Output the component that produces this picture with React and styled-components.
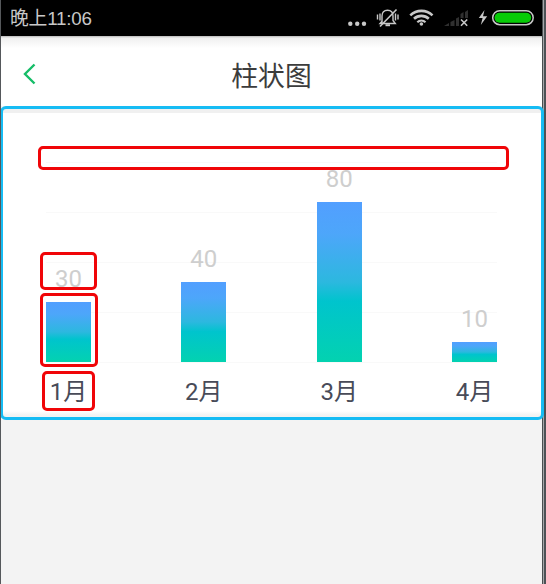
import React from 'react';
import styled, { createGlobalStyle } from 'styled-components';

const Global = createGlobalStyle`
  * { box-sizing: border-box; }
  body { margin: 0; background: #f3f3f3; font-family: Roboto, "Noto Sans CJK SC", sans-serif; }
`;

const Screen = styled.main`
  position: relative;
  width: 546px;
  height: 584px;
  overflow: hidden;
  padding-right: 4px;
  background: linear-gradient(to right, #f3f3f3 0 541px, #4a4e50 541px 542px, #a5a8aa 542px 543px, #4d5256 543px);
  border-left: 1px solid #55585b;
`;

const StatusBar = styled.header`
  display: flex;
  align-items: center;
  justify-content: space-between;
  height: 36px;
  padding-left: 9px;
  background: #000;
  color: #c8c8c8;
`;

const Clock = styled.time`
  padding-top: 2px;
  font: 18.8px/34px "Liberation Sans", "Noto Sans CJK SC", sans-serif;
  letter-spacing: -0.2px;
`;

const StatusIcons = styled.svg`
  display: block;
  width: 201px;
  height: 36px;
`;

const TitleBar = styled.nav`
  display: grid;
  grid-template-columns: 60px 1fr 60px;
  align-items: center;
  height: 70px;
  background: linear-gradient(#b8b8b8 0, #f0f0f0 2px, #fff 12px);
`;

const BackIcon = styled.svg`
  width: 14px;
  height: 22px;
  margin: 5px 0 0 21px;
`;

const Title = styled.h1`
  margin: 7px 0 0;
  color: #3c3c3c;
  font: 400 26.8px/40px "Noto Sans CJK SC", sans-serif;
  text-align: center;
`;

const ChartPanel = styled.section`
  position: relative;
  width: 544px;
  height: 314px;
  margin-left: -1px;
  border: 3px solid #16bcf4;
  border-radius: 6px;
  background: linear-gradient(#f0f0f0 0 4px, #fff 4px 302px, #f3f3f3 306px);
`;

const Plot = styled.div`
  display: flex;
  justify-content: space-between;
  width: 451px;
  height: 201px;
  margin: 53px 0 0 43px;
  background: repeating-linear-gradient(#f9f9f9 0 1px, #fff 1px 50px);
`;

const Column = styled.div`
  display: flex;
  flex-direction: column;
  align-items: center;
  justify-content: flex-end;
  width: 45px;
  height: 200px;
`;

const Value = styled.span`
  color: #cecece;
  font: 24px/28px Roboto, sans-serif;
  margin-bottom: 9px;
`;

const Bar = styled.div`
  flex: none;
  width: 45px;
  height: ${(p) => p.$value * 2}px;
  background: linear-gradient(#529fff 0%, #4da6fa 20%, #2cb8df 50%, #00c4cd 62%, #03d2b0 100%);
`;

const Labels = styled.div`
  display: flex;
  justify-content: space-between;
  width: 451px;
  margin: 9px 0 0 43px;
`;

const Label = styled.span`
  width: 45px;
  color: #484b58;
  font: 24px/40px Roboto, "Noto Sans CJK SC", sans-serif;
  text-align: center;
  white-space: nowrap;
`;

const Highlight = styled.div`
  position: absolute;
  left: ${(p) => p.$x - 3}px;
  top: ${(p) => p.$y - 109}px;
  width: ${(p) => p.$w}px;
  height: ${(p) => p.$h}px;
  border: 3px solid #f00508;
  border-radius: 5px;
`;

const months = [
  { label: '1月', value: 30 },
  { label: '2月', value: 40 },
  { label: '3月', value: 80 },
  { label: '4月', value: 10 },
];

const highlights = [
  { x: 38, y: 146, w: 471, h: 24 },
  { x: 40, y: 252, w: 57, h: 38 },
  { x: 40, y: 293, w: 58, h: 74 },
  { x: 42, y: 371, w: 53, h: 40 },
];

function SystemIcons() {
  return (
    <StatusIcons viewBox="341 0 201 36" fill="none" stroke="#c8c8c8">
      <g fill="#c8c8c8" stroke="none">
        <circle cx="350.3" cy="23.8" r="2.2" />
        <circle cx="357.2" cy="23.8" r="2.2" />
        <circle cx="364" cy="23.8" r="2.2" />
      </g>
      <g strokeWidth="1.4">
        <path d="M382 22.8V16c0-3.8 2-5.8 5.5-5.8s5.5 2 5.5 5.8v4.5l2.3 3H380l2-2.3" />
        <path d="M380 26.5 396.5 9.5" strokeWidth="1.6" />
        <path d="M377.5 14.5v5M380 13.5v7M395.5 13.5v7M398 14.5v5" />
        <path d="M385.5 25.2h4.5" strokeWidth="2" />
      </g>
      <g strokeWidth="2.6">
        <path d="M410.3 15.4a16 16 0 0 1 22.2 0" />
        <path d="M414 18.8a10.8 10.8 0 0 1 14.8 0" />
        <path d="M417.3 22.2a6 6 0 0 1 8.2 0" strokeWidth="2.2" />
        <circle cx="421.4" cy="24" r="1.8" fill="#c8c8c8" stroke="none" />
      </g>
      <g fill="#303030" stroke="none">
        <path d="M444 26l5-3v3zM450.5 22l4-2v6h-4zM456 18.5l3-1.5v9h-3zM460.5 14l3-2v6h-3zM465 12l3-2v8h-3z" />
      </g>
      <path d="m461 19.5 6.2 6.2m0-6.2L461 25.7" strokeWidth="1.6" />
      <path d="m484.5 10-5.7 8h3.8l-1.8 7 6.4-8.8H483z" fill="#c8c8c8" stroke="none" />
      <rect x="492.7" y="10.7" width="40.5" height="14" rx="7" strokeWidth="1.5" />
      <rect x="494.5" y="12.7" width="36.7" height="10" rx="5" fill="#06cb06" stroke="none" />
    </StatusIcons>
  );
}

export default function App() {
  return (
    <>
      <Global />
      <Screen>
        <StatusBar>
          <Clock>晚上11:06</Clock>
          <SystemIcons />
        </StatusBar>
        <TitleBar>
          <BackIcon viewBox="0 0 14 22" fill="none" stroke="#16bd68" strokeWidth="2.4">
            <path d="M12.5 1.5 3 11 12.5 20.5" />
          </BackIcon>
          <Title>柱状图</Title>
        </TitleBar>
        <ChartPanel>
          <Plot>
            {months.map((m) => (
              <Column key={m.label}>
                <Value>{m.value}</Value>
                <Bar $value={m.value} />
              </Column>
            ))}
          </Plot>
          <Labels>
            {months.map((m) => (
              <Label key={m.label}>{m.label}</Label>
            ))}
          </Labels>
          {highlights.map((h) => (
            <Highlight key={h.y} $x={h.x} $y={h.y} $w={h.w} $h={h.h} />
          ))}
        </ChartPanel>
      </Screen>
    </>
  );
}
